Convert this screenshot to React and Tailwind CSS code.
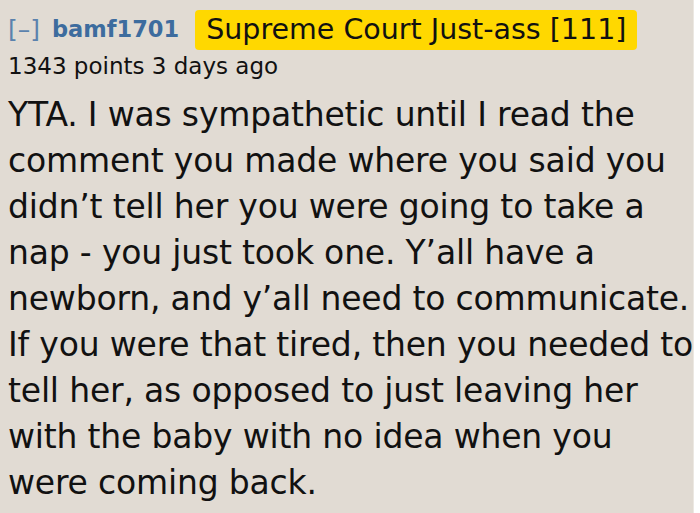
const lines = [
  "YTA. I was sympathetic until I read the",
  "comment you made where you said you",
  "didn’t tell her you were going to take a",
  "nap - you just took one. Y’all have a",
  "newborn, and y’all need to communicate.",
  "If you were that tired, then you needed to",
  "tell her, as opposed to just leaving her",
  "with the baby with no idea when you",
  "were coming back.",
];

export default function App() {
  return (
    <div className="flex w-[700px] h-[513px] bg-white overflow-hidden">
      <div className="w-[694px] h-full bg-[#e1dbd3] border-r border-[#ece8e2] pl-[8px] pt-[10px]" style={{ fontFamily: '"DejaVu Sans", Verdana, sans-serif' }}>
        <div className="flex items-center h-[40px]">
          <span className="text-[25px] text-[#5b82ad]">[–]</span>
          <span className="ml-[12px] text-[22.5px] font-bold text-[#3d6c9e]">bamf1701</span>
          <span className="ml-[16px] bg-[#ffd800] rounded-[4px] pl-[11px] pr-[11px] h-[40px] flex items-center text-[28.5px] text-[#111]">Supreme Court Just-ass [111]</span>
        </div>
        <div className="text-[23px] text-[#111] leading-[32px]">1343 points 3 days ago</div>
        <div className="text-[33px] leading-[46px] text-[#111] mt-[10px] whitespace-nowrap tracking-[-0.18px]">
          {lines.map((l, i) => (
            <div key={i}>{l}</div>
          ))}
        </div>
      </div>
    </div>
  );
}
